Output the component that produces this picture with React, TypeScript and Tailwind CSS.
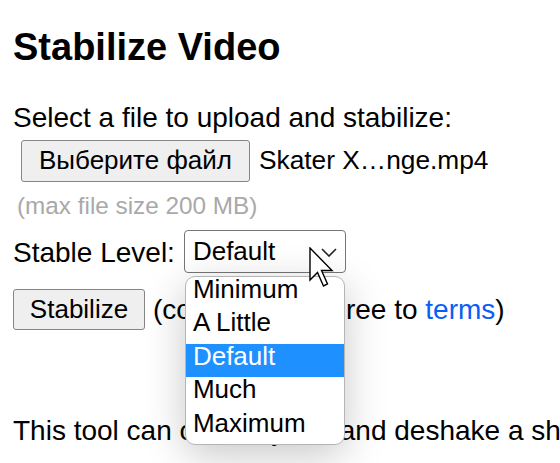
export default function App() {
  const levels = ['Minimum', 'A Little', 'Default', 'Much', 'Maximum']
  const itemHeights = ['h-[33px]', 'h-[34px]', 'h-[33px]', 'h-[34px]', 'h-[33px]']

  return (
    <div className="w-[560px] h-[463px] overflow-hidden bg-white text-black font-['Liberation_Sans',Arial,sans-serif] pl-[13px]">
      <h1 className="mt-[26px] text-[38px] leading-[43px] font-bold whitespace-nowrap">Stabilize Video</h1>

      <p className="mt-[33px] text-[28px] leading-[32px] whitespace-nowrap">Select a file to upload and stabilize:</p>

      {/* file input */}
      <div className="mt-[6px] flex items-center whitespace-nowrap">
        <button className="ml-[8px] w-[229px] h-[42px] border border-[#858585] rounded-[3px] bg-[#efefef] text-[26px] leading-[29px] pb-[2px]">
          Выберите файл
        </button>
        <span className="ml-[9px] text-[26.3px] leading-[29px] pb-[2px]">Skater X…nge.mp4</span>
      </div>

      <p className="mt-[10px] ml-[4px] text-[24.3px] leading-[28px] text-[#a9a9a9] whitespace-nowrap">(max file size 200 MB)</p>

      {/* level select */}
      <div className="mt-[10px] flex items-center whitespace-nowrap">
        <span className="text-[28px] leading-[32px] pt-[2px]">Stable Level:</span>
        <div className="relative ml-[9px]">
          <div className="w-[162px] h-[43px] border border-[#767676] rounded-[4px] bg-white flex items-center pl-[8px] text-[26px] leading-[29px]">
            Default
          </div>
          <svg className="absolute left-[137px] top-[18px]" width="16" height="9" viewBox="0 0 16 9" fill="none">
            <path d="M1 1l7 7 7-7" stroke="#222" strokeWidth="1.6" />
          </svg>

          {/* open listbox */}
          <div className="absolute left-[1px] top-[46px] z-10 w-[160px] border border-[#b5b5b5] rounded-[10px] bg-white overflow-hidden shadow-[0_10px_40px_rgba(0,0,0,0.22)]">
            {levels.map((level, i) => (
              <div
                key={level}
                className={`${itemHeights[i]} pl-[7px] text-[26px] leading-[24px] ${level === 'Default' ? 'bg-[#1e90ff] text-white' : 'text-black'}`}
              >
                {level}
              </div>
            ))}
          </div>

          {/* mouse pointer */}
          <svg className="absolute left-[125px] top-[17px] z-20" width="26" height="42" viewBox="0 0 26 42">
            <path
              d="M1 1 L1 33 L8.5 25.5 L14.5 39 L18.5 37 L12.5 23.5 L23 23.5 Z"
              fill="#fff"
              stroke="#000"
              strokeWidth="1.4"
              strokeLinejoin="miter"
            />
          </svg>
        </div>
      </div>

      {/* submit row */}
      <div className="mt-[16px] flex items-center whitespace-nowrap">
        <button className="w-[132px] h-[41px] border border-[#858585] rounded-[3px] bg-[#efefef] text-[26px] leading-[29px] pb-[1px]">
          Stabilize
        </button>
        <span className="ml-[8px] text-[28px] leading-[32px] pt-[1px]">
          (confirm you agree to <a className="text-[#0a5ef5]">terms</a>)
        </span>
      </div>

      <p className="mt-[85px] text-[28px] leading-[32px] whitespace-nowrap">
        This tool can correct jerks and deshake a shaky video.
      </p>
    </div>
  )
}
